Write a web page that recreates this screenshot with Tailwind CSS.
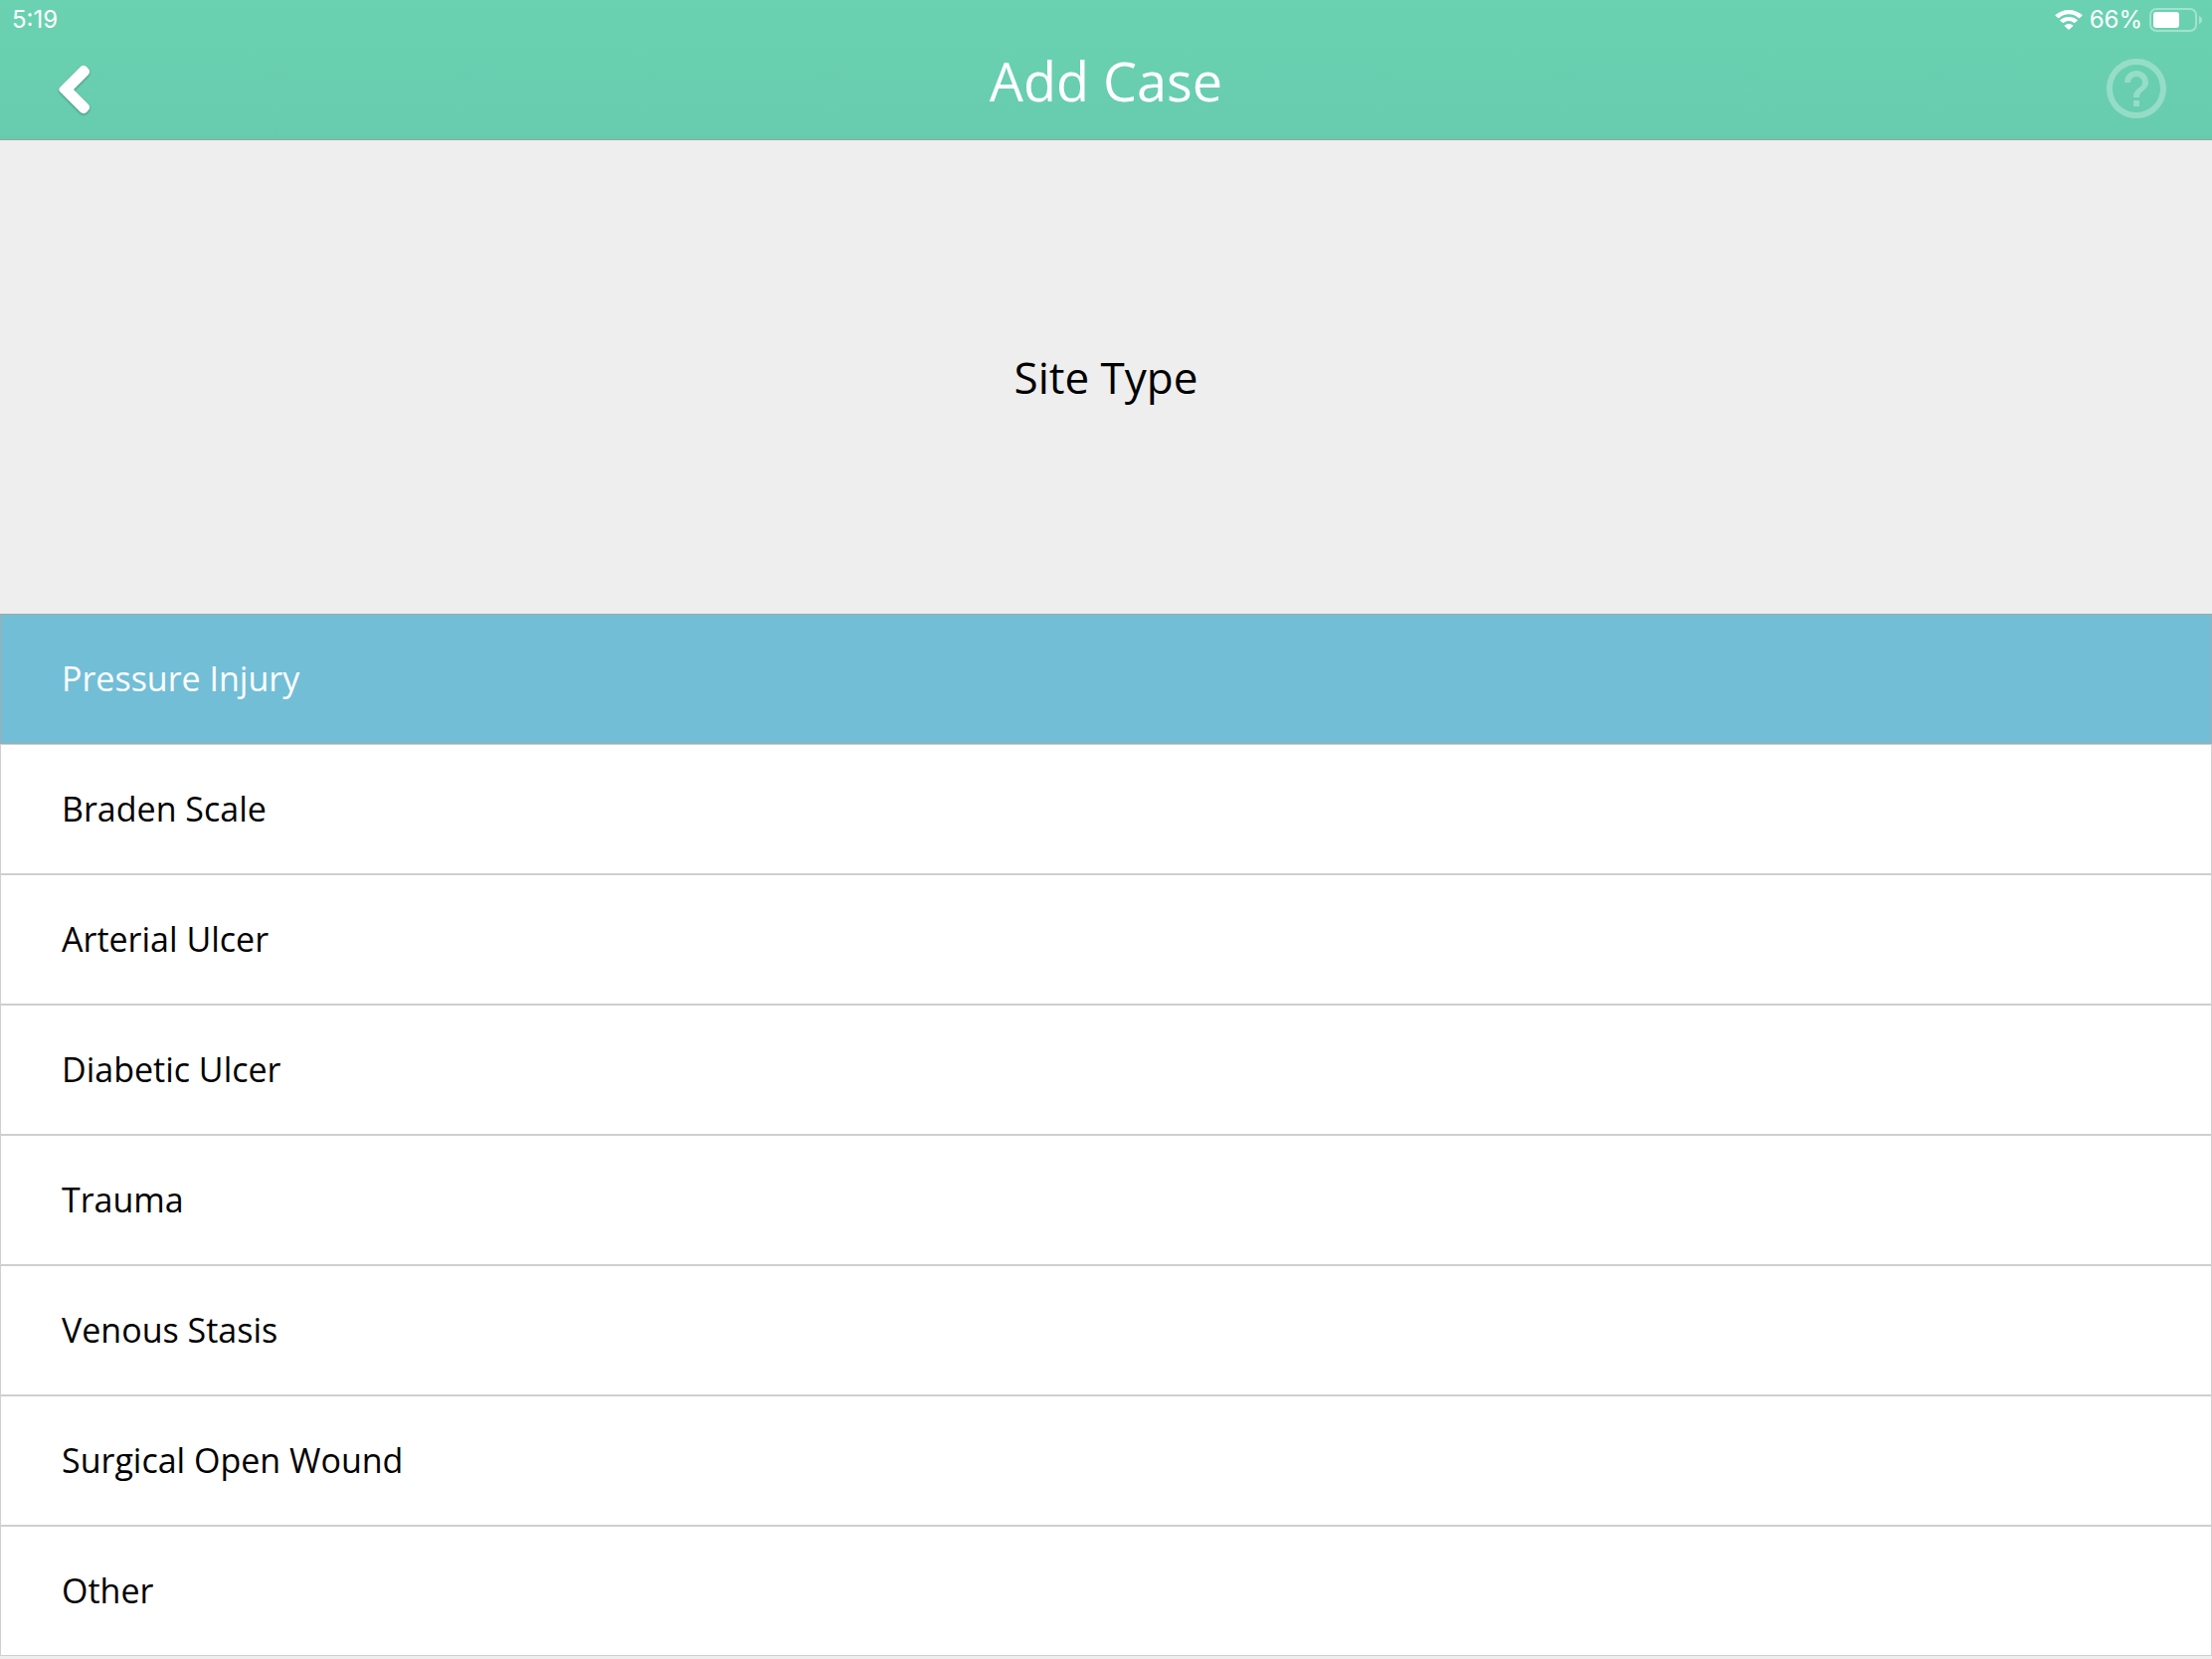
<!DOCTYPE html>
<html lang="en">
<head>
    <meta charset="UTF-8">
    <meta name="viewport" content="width=device-width, initial-scale=1.0">
    <title>Add Case</title>
    <script src="https://cdn.jsdelivr.net/npm/@tailwindcss/browser@4"></script>
</head>
<body class="min-h-screen bg-[#eeeeee] font-['Open_Sans',sans-serif] text-black">
    <header class="border-b border-[#a0a0a0] bg-linear-to-b from-[#6ad2b0] to-[#67ccae] text-white">
        <!-- Status bar -->
        <div class="flex h-10 items-center justify-between pr-[9px] pl-3 font-['Inter',sans-serif] text-2xl">
            <span>5:19</span>
            <div class="flex items-center gap-[7px]">
                <svg class="h-5 w-7" viewBox="0 0 28 20" fill="currentColor" aria-hidden="true">
                    <path d="M14 4.2c3.8 0 7.3 1.5 9.9 4 .2.2.5.2.7 0l2.9-2.4c.2-.2.2-.5 0-.7C23.9 2 19.2 0 14 0S4.1 2 .5 5.1c-.2.2-.2.5 0 .7l2.9 2.4c.2.2.5.2.7 0 2.6-2.5 6.1-4 9.9-4z" />
                    <path d="M14 11c2 0 3.900.8 5.300 2 .2.2.5.2.7 0l2.7-2.2c.2-.2.2-.5 0-.7C20.4 8.1 17.3 6.9 14 6.9s-6.4 1.2-8.7 3.2c-.2.2-.2.5 0 .7L8 13c.2.2.5.2.7 0 1.4-1.2 3.3-2 5.3-2z" />
                    <path d="M18.2 15.5c.2.2.2.5 0 .7l-3.8 3.5c-.2.2-.6.2-.8 0l-3.8-3.5c-.2-.2-.2-.5 0-.7 1.1-.9 2.6-1.5 4.2-1.5s3.1.6 4.2 1.5z" />
                </svg>
                <span>66%</span>
                <svg class="h-6 w-[54px]" viewBox="0 0 54 24" fill="currentColor" aria-hidden="true">
                    <rect x="1" y="1" width="46" height="22" rx="6" fill="none" stroke="currentColor" stroke-width="2" opacity=".38" />
                    <rect x="4" y="4" width="26" height="16" rx="3" />
                    <path d="M50 8c4 1.500 4 6.500 0 8z" opacity=".4" />
                </svg>
            </div>
        </div>
        <!-- Title bar -->
        <div class="grid h-[100px] grid-cols-[1fr_auto_1fr] items-start px-[46px]">
            <button type="button" aria-label="Back" class="mt-5 ml-[6px] justify-self-start">
                <svg class="h-16 w-12 drop-shadow-[0_1px_1px_rgb(0_0_0/0.35)]" viewBox="0 0 48 64" aria-hidden="true">
                    <path d="M8 28 29 7Q32.5 4.5 35.5 7.5Q40 11.5 37 15L22 30 37 45Q40 48.5 35.5 52.5Q32.5 55.5 29 53L8 32Q6.5 30 8 28Z" fill="currentColor" />
                </svg>
            </button>
            <h1 class="text-[54px] leading-[82px]">Add Case</h1>
            <button type="button" aria-label="Help" class="mt-[19px] justify-self-end text-white/30">
                <svg class="size-[60px]" viewBox="2 2 20 20" fill="currentColor" aria-hidden="true">
                    <path d="M11 18h2v-2h-2v2zm1-16C6.48 2 2 6.48 2 12s4.48 10 10 10 10-4.48 10-10S17.52 2 12 2zm0 18c-4.41 0-8-3.59-8-8s3.59-8 8-8 8 3.59 8 8-3.59 8-8 8zm0-14c-2.21 0-4 1.79-4 4h2c0-1.1.9-2 2-2s2 .9 2 2c0 2-3 1.75-3 5h2c0-2.25 3-2.5 3-5 0-2.21-1.79-4-4-4z" />
                </svg>
            </button>
        </div>
    </header>

    <main>
        <h2 id="site-type" class="py-52 text-center text-[44px] leading-[60px]">Site Type</h2>
        <ul aria-labelledby="site-type" class="text-[34px] leading-[45px]">
            <li><button type="button" aria-pressed="true" class="w-full border border-[#a3adb0] bg-[#72bed7] px-[61px] py-[42px] text-left text-white">Pressure Injury</button></li>
            <li><button type="button" class="w-full border border-[#cfcfcf] bg-white px-[61px] py-[42px] text-left">Braden Scale</button></li>
            <li><button type="button" class="w-full border border-[#cfcfcf] bg-white px-[61px] py-[42px] text-left">Arterial Ulcer</button></li>
            <li><button type="button" class="w-full border border-[#cfcfcf] bg-white px-[61px] py-[42px] text-left">Diabetic Ulcer</button></li>
            <li><button type="button" class="w-full border border-[#cfcfcf] bg-white px-[61px] py-[42px] text-left">Trauma</button></li>
            <li><button type="button" class="w-full border border-[#cfcfcf] bg-white px-[61px] py-[42px] text-left">Venous Stasis</button></li>
            <li><button type="button" class="w-full border border-[#cfcfcf] bg-white px-[61px] py-[42px] text-left">Surgical Open Wound</button></li>
            <li><button type="button" class="w-full border border-[#cfcfcf] bg-white px-[61px] py-[42px] text-left">Other</button></li>
        </ul>
    </main>
</body>
</html>
